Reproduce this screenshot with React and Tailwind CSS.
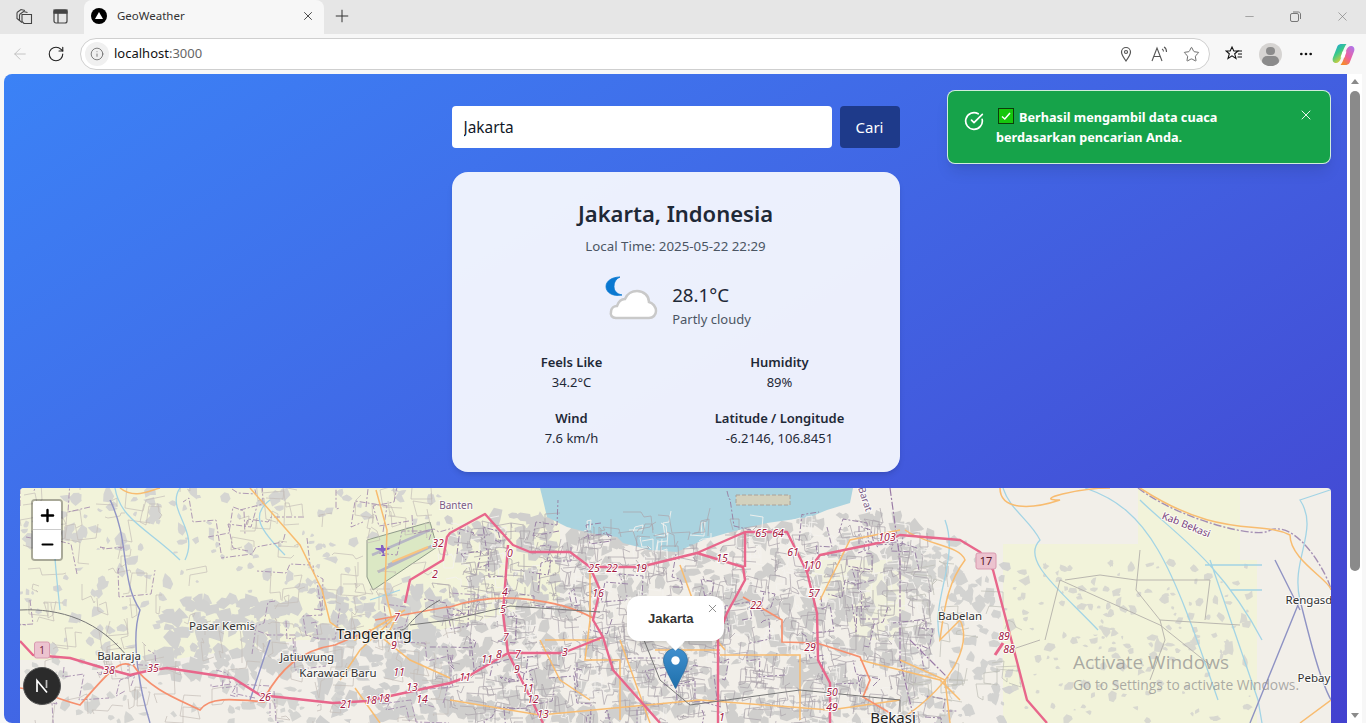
import React from 'react';
import { ArrowLeft, CircleCheckBig, Info, Minus, MoreHorizontal, Plus, RotateCw, Star, X } from 'lucide-react';

// little seeded random so the map texture is the same on every run
const makeRandom = (seed) => () => {
  seed = (seed * 16807) % 2147483647;
  return (seed - 1) / 2147483646;
};

// uneven six sided patches for built up land
const buildBlobs = (seed, count, x0, y0, x1, y1, min, max) => {
  const r = makeRandom(seed);
  return Array(count).fill().map(() => {
    const cx = x0 + r() * (x1 - x0);
    const cy = y0 + r() * (y1 - y0);
    const s = min + r() * (max - min);
    const stretch = 0.5 + r() * 0.9;
    const pts = [0, 1, 2, 3, 4, 5].map((i) => {
      const angle = (i / 6) * Math.PI * 2 + r() * 0.5;
      const dist = s * (0.45 + r() * 0.75);
      return `${(cx + Math.cos(angle) * dist).toFixed(1)} ${(cy + Math.sin(angle) * dist * stretch).toFixed(1)}`;
    });
    return `M${pts.join('L')}Z`;
  }).join('');
};

// streets go mostly along the axes, with a slight lean
const buildRoads = (seed, count, x0, y0, x1, y1, len) => {
  const r = makeRandom(seed);
  return Array(count).fill().map(() => {
    let x = x0 + r() * (x1 - x0);
    let y = y0 + r() * (y1 - y0);
    let d = `M${x.toFixed(0)} ${y.toFixed(0)}`;
    let across = r() > 0.5;
    for (let i = 0; i < 4; i++) {
      const step = (r() - 0.5) * len * 2;
      const lean = (r() - 0.5) * len * 0.35;
      x += across ? step : lean;
      y += across ? lean : step;
      across = !across;
      d += `L${x.toFixed(0)} ${y.toFixed(0)}`;
    }
    return d;
  }).join('');
};

const grayWest = buildBlobs(11, 300, 20, 488, 450, 723, 2, 8);
const grayBlock = buildBlobs(13, 110, 165, 600, 300, 680, 4, 11);
const grayTang = buildBlobs(17, 170, 310, 590, 450, 723, 4, 10);
const grayCity = buildBlobs(23, 700, 450, 515, 930, 723, 3, 10);
const grayEast = buildBlobs(37, 120, 905, 540, 1010, 723, 2, 8);
const grayFar = buildBlobs(41, 170, 1010, 560, 1250, 723, 1.500, 6);
const minorWest = buildRoads(5, 130, 20, 488, 450, 723, 22);
const minorCity = buildRoads(7, 420, 450, 530, 930, 723, 18);
const whiteCity = buildRoads(29, 300, 450, 530, 930, 723, 14);
const minorEast = buildRoads(9, 26, 905, 560, 1010, 723, 24);
const borderWest = buildRoads(31, 42, 20, 488, 450, 723, 34);
const borderCity = buildRoads(43, 70, 450, 530, 930, 723, 28);

const routeLabels = [
  ['32', 438, 547], ['2', 435, 578], ['7', 397, 621], ['9', 394, 649], ['11', 399, 676], ['13', 412, 691],
  ['14', 422, 703], ['18', 371, 704], ['18', 384, 702], ['21', 346, 708], ['26', 265, 701], ['38', 109, 674],
  ['35', 153, 672], ['0', 510, 557], ['25', 594, 572], ['22', 612, 572], ['19', 641, 572], ['15', 722, 562],
  ['65', 761, 537], ['64', 778, 537], ['61', 793, 556], ['110', 812, 569], ['103', 887, 541], ['57', 814, 597],
  ['16', 598, 597], ['4', 505, 596], ['5', 503, 613], ['22', 756, 609], ['7', 506, 641], ['8', 499, 658],
  ['7', 518, 658], ['3', 565, 656], ['11', 487, 663], ['11', 465, 681], ['9', 517, 673], ['11', 528, 692],
  ['12', 533, 703], ['13', 543, 718], ['29', 810, 651], ['50', 832, 696], ['49', 832, 711], ['1', 722, 721],
  ['89', 1004, 640], ['88', 1009, 653],
];

const placeLabels = [
  ['Pasar Kemis', 222, 630], ['Balaraja', 119, 660], ['Jatiuwung', 307, 661],
  ['Karawaci Baru', 338, 677], ['Babelan', 960, 620], ['Rengasd', 1309, 604], ['Pebay', 1314, 682],
];

const MapArt = () => (
  <svg viewBox="20 488 1311 400" className="block w-full h-full font-['Noto_Sans',sans-serif]">
    <rect x="20" y="488" width="1311" height="400" fill="#f2efe9" />
    {/* farmland */}
    <path d="M20 488H560V600L400 640H300L170 660H20Z" fill="#f2f3da" />
    <path d="M1003 544H1138V488H1240V560H1257V723H1003Z" fill="#f2f3da" />
    <path d="M800 560H905V640H860Z" fill="#f1f1de" />
    {/* built up areas */}
    <path d={grayWest} fill="#d5d5d2" />
    <path d={grayBlock} fill="#d2d2d0" />
    <path d={grayTang} fill="#d0d0cf" />
    <path d={grayCity} fill="#d0cfcd" />
    <path d={grayEast} fill="#d3d3d1" />
    <path d={grayFar} fill="#d8d8d0" />
    {/* sea */}
    <path d="M540 488L543 500L547 517L567 527L590 533L617 537L623 543L650 550L677 552L703 540L727 533L767 523L810 517L827 510L850 503L853 488Z" fill="#aad3df" />
    <path d="M736 495H790V505H736Z" fill="#d3d1bd" stroke="#a9a29a" strokeDasharray="4 2" />
    {/* airport */}
    <path d="M367 577V540L430 522L437 547L373 590Z" fill="#dbe8c4" stroke="#8f9a8a" />
    <path d="M372 555L430 530M378 572L434 545M388 565L430 547" stroke="#b7b7c4" strokeWidth="2.500" fill="none" />
    <path d="M392 562L428 547" stroke="#f9c47f" strokeWidth="2" fill="none" />
    <path d="M381 551l-6 -2l1 -1l5 0l0 -3l2 0l1 3l5 0l1 1l-6 2l0 3l2 2l-5 0l2 -2z" fill="#8461c4" />
    <path d={whiteCity} fill="none" stroke="#f4f2ee" strokeWidth="0.900" />
    <path d={minorWest} fill="none" stroke="#c4bdb8" strokeWidth="0.700" />
    <path d={minorCity} fill="none" stroke="#aaa3aa" strokeWidth="0.700" />
    <path d={minorEast} fill="none" stroke="#bdbdb5" strokeWidth="0.700" />
    {/* rivers */}
    <path d="M115 488C120 520 150 530 180 560M180 488C165 510 200 530 185 560M60 510C50 530 55 560 60 610M270 500C250 515 260 530 285 555M370 600L400 590M1003 488C1010 510 1030 520 1040 540C1020 560 1060 590 1098 630M1085 488C1150 510 1170 560 1218 700M1140 500C1170 530 1220 560 1262 640M1210 560L1258 700L1262 723M1205 565H1262M1230 590L1262 590M945 520C960 560 930 600 940 640M1330 490L1300 500C1320 530 1290 560 1300 600" fill="none" stroke="#a3d4e5" strokeWidth="1.300" />
    <path d="M110 500C130 540 120 580 140 610C130 640 140 690 150 723M270 640L250 700M1250 723L1300 600C1310 640 1320 680 1331 700M1275 560L1300 610" fill="none" stroke="#8f93c4" strokeWidth="1.400" />
    {/* admin boundaries */}
    <path d={borderWest} fill="none" stroke="#a78fb0" strokeWidth="0.900" strokeDasharray="6 2 2 2" />
    <path d={borderCity} fill="none" stroke="#9a84a6" strokeWidth="1" strokeDasharray="6 2 2 2" />
    <path d="M890 488L900 560V660L915 723M910 640L950 680" fill="none" stroke="#9a7ba6" strokeWidth="1.200" strokeDasharray="8 2 2 2" />
    <path d="M1138 488C1180 520 1260 540 1270 530C1300 520 1330 580 1331 590" fill="none" stroke="#a48fb4" strokeWidth="1.400" strokeDasharray="8 2 2 2" />
    <path d="M1140 550L1136 590L1160 620L1165 640L1150 680M1065 580L1100 575L1136 580L1210 580L1205 620M1045 640L1060 580M1160 620L1240 625M1060 580L1160 625L1210 665M1040 640L1010 650" fill="none" stroke="#b3b0aa" strokeWidth="0.900" />
    {/* primary roads */}
    <path d="M120 488C135 500 150 490 160 488M250 488L300 545L322 590L330 622L355 640L405 610M376 490L387 530L385 590L392 620L360 650L340 680M355 688L380 723M400 610L385 640L410 660L450 678M590 567V620L585 660H620V720M450 700L540 715L700 700L830 710L900 700M545 640H600M620 640L650 723M540 640L560 680L590 700M680 565L700 620L725 650M655 650H720M720 655H800V720M820 600L850 540L900 530M860 660L900 670L940 680L960 700M905 530C925 545 960 545 965 560C950 580 945 600 940 640L960 620C970 640 960 680 900 720M1000 488C1000 510 1030 510 1060 500C1030 500 1080 488 1110 488M900 660L945 680L950 723M1140 488C1220 540 1260 520 1290 535C1290 560 1330 580 1331 590M1331 700L1300 723" fill="none" stroke="#f8bc70" strokeWidth="1.500" />
    {/* trunk roads */}
    <path d="M20 688C40 690 60 700 80 705C110 670 120 660 130 665M133 665C150 690 180 700 200 710C210 695 240 700 265 702M265 697C280 670 300 650 335 645L370 630L375 640M375 620L447 607L450 607M450 607C500 590 560 600 593 618M743 597L782 620V642L817 643L860 657L870 680L863 697L890 713" fill="none" stroke="#f6906e" strokeWidth="1.700" />
    {/* motorways */}
    <path d="M20 641L33 655L70 658L100 667L130 675L147 671L167 668L233 678L260 695L333 703L367 701L450 683L467 677L508 653L563 653L603 637L593 620L600 590L590 567L570 552L530 552L513 545L485 514L450 533L447 537L443 560L410 580L405 603M508 545L503 613L508 653L543 723M603 637L613 670L660 723M590 567L640 567L697 553L743 567L745 580L727 613L718 637L718 723M745 532H787L807 572L817 613L818 660L830 683V723M807 572L820 555L883 542L900 535L960 540L980 552L993 570L1027 700L1047 723M697 553L745 532V567" fill="none" stroke="#e8668b" strokeWidth="2.400" strokeLinejoin="round" />
    <path d="M995 655L1003 643" stroke="#e8668b" strokeWidth="3" />
    {/* railway */}
    <path d="M20 610C60 608 100 620 130 660M630 605L660 680L690 705L800 690L900 700L900 712M410 625L450 620L510 606L600 612M400 630C410 630 405 620 440 600" fill="none" stroke="#767676" strokeWidth="1" />
    {/* shields */}
    <rect x="34.500" y="642" width="15" height="16" rx="2" fill="#ecc3cf" stroke="#d99ab0" />
    <text x="42" y="654" fontSize="10" textAnchor="middle" fill="#7a2a3c">1</text>
    <rect x="976" y="553" width="20" height="16" rx="2" fill="#ecc3cf" stroke="#d99ab0" />
    <text x="986" y="565" fontSize="11" textAnchor="middle" fill="#5a1a2c">17</text>
    {routeLabels.map(([label, x, y], i) => (
      <text key={i} x={x} y={y} fontSize="10.500" fontStyle="italic" textAnchor="middle" fill="#a1183e" stroke="#ffffff" strokeWidth="2" paintOrder="stroke">{label}</text>
    ))}
    {placeLabels.map(([label, x, y]) => (
      <text key={label} x={x} y={y} fontSize="11.500" textAnchor="middle" fill="#333333" stroke="#ffffff" strokeOpacity="0.8" strokeWidth="2" paintOrder="stroke">{label}</text>
    ))}
    <text x="374" y="639" fontSize="15" textAnchor="middle" fill="#222222" stroke="#ffffff" strokeOpacity="0.8" strokeWidth="2" paintOrder="stroke">Tangerang</text>
    <text x="893" y="723" fontSize="15" textAnchor="middle" fill="#222222" stroke="#ffffff" strokeOpacity="0.8" strokeWidth="2" paintOrder="stroke">Bekasi</text>
    <text x="456" y="509" fontSize="10" textAnchor="middle" fill="#7a5a86" stroke="#ffffff" strokeOpacity="0.7" strokeWidth="2" paintOrder="stroke">Banten</text>
    <text x="0" y="0" fontSize="10" textAnchor="middle" fill="#7a3f80" stroke="#ffffff" strokeOpacity="0.7" strokeWidth="2" paintOrder="stroke" transform="translate(1185 528) rotate(22)">Kab Bekasi</text>
    <text x="0" y="0" fontSize="10" textAnchor="middle" fill="#7a5a86" stroke="#ffffff" strokeOpacity="0.7" strokeWidth="2" paintOrder="stroke" transform="translate(862 500) rotate(72)">Barat</text>
  </svg>
);

const Marker = () => (
  <svg width="25" height="41" viewBox="0 0 25 41">
    <defs>
      <linearGradient id="pin" x1="0" y1="0" x2="0" y2="1">
        <stop offset="0" stopColor="#3f8fce" />
        <stop offset="1" stopColor="#1f70ab" />
      </linearGradient>
    </defs>
    <path d="M12.500 0.500C5.800 0.500 0.500 5.800 0.500 12.500C0.500 19 9 33 12.500 40.500C16 33 24.500 19 24.500 12.500C24.500 5.800 19.200 0.500 12.500 0.500Z" fill="url(#pin)" stroke="#2a6c9e" strokeWidth="0.700" />
    <circle cx="12.500" cy="12.500" r="4.200" fill="#ffffff" />
  </svg>
);

const WeatherIcon = () => (
  <svg width="56" height="62" viewBox="0 0 56 62">
    <path d="M16 3C8 3 2 7 2 12.500C2 18 8 23 18 21C13 20 10 17 10 12.500C10 8 12 5 16 3Z" fill="#0a78d1" stroke="#0a78d1" strokeWidth="0.800" />
    <path transform="translate(-2 0)" d="M14 44C10 44 8 41 9 38C9 34 12 32 15 32C17 26 21 25 23 25C25 20 30 17 35 17C42 17 47 22 47 28C51 29 54 33 54 37C54 41 51 44 47 44Z" fill="#ffffff" stroke="#c9c9c9" strokeWidth="2.500" />
  </svg>
);

const BrowserBar = () => (
  <div className="h-[74px] bg-[#f7f7f7] text-[#333333] font-['Noto_Sans',sans-serif]">
    <div className="h-[34px] bg-[#e6e6e6] flex items-stretch">
      <div className="w-[84px] flex items-center gap-[20px] pl-[16px] pb-[2px]">
        <svg width="17" height="17" viewBox="0 0 17 17" fill="none" stroke="#444444" strokeWidth="1.100">
          <path d="M1 4.500L5 1.500L9 2.500M3.500 6.500L7.500 3.500L11.500 4.500M6 6.500H15.500V15.500H8L6 13.500Z" />
          <path d="M3.500 6.500V12.500L6 14.500M1 4.500V10.500L3.500 12.500" />
        </svg>
        <svg width="15" height="15" viewBox="0 0 15 15" fill="none" stroke="#444444" strokeWidth="1.200">
          <rect x="1" y="1" width="13" height="13" rx="2" />
          <path d="M1 4H14M5 4V14" />
          <rect x="1" y="1" width="13" height="3" fill="#444444" />
        </svg>
      </div>
      <div className="w-[240px] bg-[#f7f7f7] rounded-t-lg flex items-center pl-[7px] pr-[9px] pb-[2px]">
        <svg width="16" height="16" viewBox="0 0 16 16">
          <circle cx="8" cy="8" r="8" fill="#000000" />
          <path d="M8 4L12 11H4Z" fill="#ffffff" />
        </svg>
        <span className="ml-[10px] text-[11.500px] flex-1">GeoWeather</span>
        <X size={14} strokeWidth={1.500} />
      </div>
      <div className="w-[36px] flex items-center justify-center pb-[2px]">
        <Plus size={20} strokeWidth={1.200} />
      </div>
      <div className="flex-1 flex items-center justify-end pr-[16px] pb-[2px] text-[#777777]">
        <Minus size={13} strokeWidth={1.100} />
        <svg className="ml-[34px]" width="11" height="11" viewBox="0 0 11 11" fill="none" stroke="#777777" strokeWidth="1">
          <rect x="0.500" y="2.500" width="8" height="8" rx="1.500" />
          <path d="M3 1H8.500C9.500 1 10.500 2 10.500 3V8" />
        </svg>
        <X className="ml-[34px]" size={15} strokeWidth={1} />
      </div>
    </div>
    <div className="h-[40px] flex items-center">
      <div className="w-[80px] flex items-center pl-[11px] gap-[18px]">
        <ArrowLeft size={18} strokeWidth={1.200} className="text-[#bdbdbd]" />
        <RotateCw size={18} strokeWidth={1.500} className="text-[#222222]" />
      </div>
      <div className="w-[1130px] h-[32px] bg-white border border-[#cfcfcf] rounded-full flex items-center pl-[4px] pr-[9px]">
        <div className="w-[24px] h-[24px] rounded-full bg-[#f0f0f0] flex items-center justify-center">
          <Info size={14} strokeWidth={1.400} className="text-[#666666]" />
        </div>
        <span className="ml-[5px] text-[13px] text-[#111111]">localhost<span className="text-[#666666]">:3000</span></span>
        <div className="flex-1" />
        <svg className="mr-[3px]" width="14" height="16" viewBox="0 0 14 16" fill="none" stroke="#555555" strokeWidth="1.200">
          <path d="M7 15C4.500 11.500 2.500 8.500 2.500 6A4.500 4.500 0 0 1 11.500 6C11.500 8.500 9.500 11.500 7 15Z" />
          <circle cx="7" cy="6" r="1.500" />
        </svg>
        <svg className="ml-[15px]" width="18" height="16" viewBox="0 0 18 16" fill="none" stroke="#555555" strokeWidth="1.100">
          <path d="M1 15L6 2L11 15M3 10.500H9M11 3C12 3.500 12.500 4.500 12.500 5.500M13 1C15 2 15.500 4 15.500 6" />
        </svg>
        <Star className="ml-[14px] text-[#555555]" size={17} strokeWidth={1.200} />
      </div>
      <div className="flex-1 flex items-center pl-[15px]">
        <svg width="18" height="18" viewBox="0 0 18 18" fill="none" stroke="#111111" strokeWidth="1.100">
          <path d="M7 2L8.800 6H13L9.700 8.800L11 13.500L7 10.800L3 13.500L4.300 8.800L1 6H5.200Z" />
          <path d="M12.500 6H17M13 9H17M12.500 12H17" />
        </svg>
        <div className="ml-[16px] w-[23px] h-[23px] rounded-full bg-[#d6d4d2] overflow-hidden flex flex-col items-center">
          <div className="mt-[4px] w-[9px] h-[9px] rounded-full bg-[#8b8b8b]" />
          <div className="mt-[1px] w-[17px] h-[10px] rounded-full bg-[#8b8b8b]" />
        </div>
        <MoreHorizontal className="ml-[16px] text-[#111111]" size={16} strokeWidth={2} />
        <svg className="ml-[18px]" width="23" height="23" viewBox="0 0 23 23">
          <defs>
            <linearGradient id="cpA" x1="0" y1="0" x2="0.600" y2="1">
              <stop offset="0" stopColor="#1f9be8" />
              <stop offset="0.500" stopColor="#38c98a" />
              <stop offset="1" stopColor="#f5cf2a" />
            </linearGradient>
            <linearGradient id="cpB" x1="1" y1="0" x2="0.300" y2="1">
              <stop offset="0" stopColor="#a878f2" />
              <stop offset="0.600" stopColor="#ee5fa0" />
              <stop offset="1" stopColor="#f58a2e" />
            </linearGradient>
          </defs>
          <path d="M5.500 3C6.500 1.500 8 1 10 1H14.500C13 3 12 5 11 8L9 15C8 18.500 6 20 4 20C1 20 0 17.500 1 14.500Z" fill="url(#cpA)" />
          <path d="M17.500 20C16.500 21.500 15 22 13 22H8.500C10 20 11 18 12 15L14 8C15 4.500 17 3 19 3C22 3 23 5.500 22 8.500Z" fill="url(#cpB)" />
          <path d="M10.500 8.500H14.500L12.500 14.500H8.500Z" fill="#ffffff" />
        </svg>
      </div>
    </div>
  </div>
);

const Stat = ({ label, value }) => (
  <div className="text-center">
    <p className="text-[13px] leading-[20px] font-semibold text-[#1f2937]">{label}</p>
    <p className="text-[13px] leading-[20px] text-[#1f2937]">{value}</p>
  </div>
);

const App = () => {
  return (
    <div className="h-screen overflow-hidden bg-[#f7f7f7] flex flex-col">
      <BrowserBar />
      <div className="flex-1 min-h-0 flex pl-[4px]">
        <div className="relative w-[1343px] overflow-hidden rounded-l-lg">
          <div className="relative h-[830px] p-4 pt-[32px] bg-linear-to-br from-[#3b82f6] to-[#4338ca] font-['Noto_Sans',sans-serif]">
            <form className="w-[448px] mx-auto flex gap-2">
              <input
                type="text"
                defaultValue="Jakarta"
                className="w-[380px] h-[42px] px-3 bg-white rounded text-[15.400px] text-[#111827] outline-none"
              />
              <button type="button" className="flex-1 h-[42px] bg-[#1e3a8a] text-white text-[15px] rounded">
                Cari
              </button>
            </form>

            <div className="w-[448px] h-[300px] mx-auto mt-[24px] p-6 bg-white/90 rounded-2xl shadow-md text-center">
              <h2 className="text-[22px] leading-[34px] font-semibold text-[#1f2937]">Jakarta, Indonesia</h2>
              <p className="mt-[6px] text-[13.300px] leading-[20px] text-[#4b5563]">Local Time: 2025-05-22 22:29</p>
              <div className="mt-[24px] pl-[4px] flex items-center justify-center gap-[12px] h-[50px]">
                <WeatherIcon />
                <div className="text-left">
                  <p className="text-[18.700px] leading-[28px] text-[#1f2937]">28.1°C</p>
                  <p className="text-[13px] leading-[20px] text-[#4b5563]">Partly cloudy</p>
                </div>
              </div>
              <div className="mt-[22px] grid grid-cols-2 gap-4">
                <Stat label="Feels Like" value="34.2°C" />
                <Stat label="Humidity" value="89%" />
                <Stat label="Wind" value="7.6 km/h" />
                <Stat label="Latitude / Longitude" value="-6.2146, 106.8451" />
              </div>
            </div>

            <div className="relative mt-[16px] h-[400px] rounded overflow-hidden">
              <MapArt />

              <div className="absolute left-[11px] top-[11px] w-[32px] border-2 border-black/30 rounded-[4px] bg-clip-padding">
                <div className="h-[29px] bg-white rounded-t-[2px] border-b border-[#cccccc] flex items-center justify-center">
                  <Plus size={19} strokeWidth={3} className="text-black" />
                </div>
                <div className="h-[29px] bg-white rounded-b-[2px] flex items-center justify-center">
                  <Minus size={17} strokeWidth={3} className="text-black" />
                </div>
              </div>

              <div className="absolute left-[643px] top-[160px]">
                <Marker />
              </div>

              <div className="absolute left-[607px] top-[108px] w-[97px] h-[45px] bg-white rounded-xl shadow-md flex items-center pl-[21px] font-['Liberation_Sans',sans-serif]">
                <span className="text-[13px] font-bold text-[#333333]">Jakarta</span>
                <X size={13} strokeWidth={1.500} className="absolute right-[5px] top-[6px] text-[#757575]" />
              </div>
              <div className="absolute left-[649px] top-[147px] w-[13px] h-[13px] bg-white rotate-45" />
            </div>

            <div className="absolute left-[19px] top-[593px] w-[38px] h-[38px] rounded-full bg-[#2b2b2b] border border-[#555555] flex items-center justify-center">
              <svg width="16" height="16" viewBox="0 0 16 16" fill="none">
                <path d="M3 14V2.500L13 14.500" stroke="#ffffff" strokeWidth="1.700" />
                <path d="M12.500 2V10" stroke="#bbbbbb" strokeWidth="1.700" />
              </svg>
            </div>

            <div className="absolute left-[943px] top-[16px] w-[384px] h-[74px] bg-[#16a34a] border border-white/80 rounded-lg shadow-lg pl-[48px] pr-[90px] pt-[16px] text-white">
              <CircleCheckBig size={20} strokeWidth={2} className="absolute left-[16px] top-[20px]" />
              <p className="text-[12.700px] leading-[20px] font-bold">
                <svg className="inline-block ml-[2px] mr-[5px] align-[-2px]" width="16" height="16" viewBox="0 0 16 16">
                  <rect x="0.500" y="0.500" width="15" height="15" fill="#16c60c" stroke="#0b3d0b" />
                  <path d="M4 8.500L6.800 11L12 5" fill="none" stroke="#ffffff" strokeWidth="1.500" />
                </svg>
                Berhasil mengambil data cuaca berdasarkan pencarian Anda.
              </p>
              <X size={16} strokeWidth={1.500} className="absolute right-[16px] top-[16px] text-white/90" />
            </div>

            <div className="absolute left-[1069px] top-[576px] text-[#8a8a8a]/70 font-['Open_Sans',sans-serif]">
              <p className="text-[19px] leading-[24px]">Activate Windows</p>
              <p className="text-[13.800px] leading-[20px] mt-[1px] whitespace-nowrap">Go to Settings to activate Windows.</p>
            </div>
          </div>
        </div>

        <div className="w-[15px] bg-white flex flex-col items-center">
          <div className="mt-[5px] w-0 h-0 border-x-[4.500px] border-x-transparent border-b-[5px] border-b-[#8a8a8a]" />
          <div className="mt-[7px] w-[10px] h-[480px] rounded-full bg-[#8a8a8a]" />
          <div className="flex-1" />
          <div className="mb-[5px] w-0 h-0 border-x-[4.500px] border-x-transparent border-t-[5px] border-t-[#8a8a8a]" />
        </div>
      </div>
    </div>
  );
};

export default App;
